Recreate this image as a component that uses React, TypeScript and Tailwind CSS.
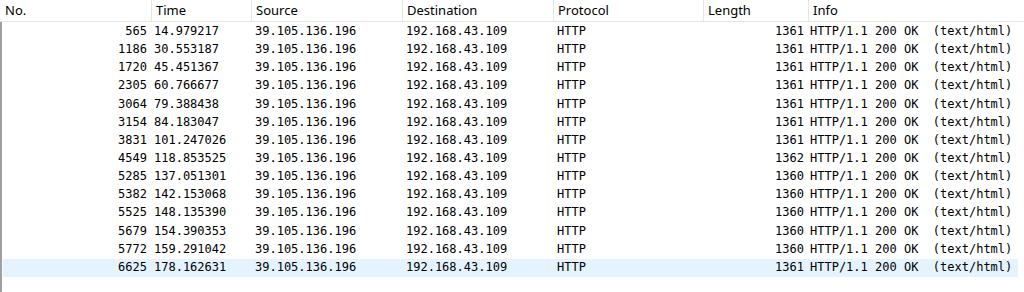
import React from "react";

const rows: [string, string, string][] = [
  ["565", "14.979217", "1361"],
  ["1186", "30.553187", "1361"],
  ["1720", "45.451367", "1361"],
  ["2305", "60.766677", "1361"],
  ["3064", "79.388438", "1361"],
  ["3154", "84.183047", "1361"],
  ["3831", "101.247026", "1361"],
  ["4549", "118.853525", "1362"],
  ["5285", "137.051301", "1360"],
  ["5382", "142.153068", "1360"],
  ["5525", "148.135390", "1360"],
  ["5679", "154.390353", "1360"],
  ["5772", "159.291042", "1360"],
  ["6625", "178.162631", "1361"],
];

const headers = ["No.", "Time", "Source", "Destination", "Protocol", "Length", "Info"];

export default function App() {
  return (
    <div className="w-[1024px] h-[292px] bg-white overflow-hidden text-black">
      <div
        className="grid grid-cols-[151px_100px_151px_151px_150px_105px_1fr] h-[22px] border-b border-[#e5e5e5] text-[13px] leading-[20px]"
        style={{ fontFamily: '"Noto Sans", "Open Sans", sans-serif' }}
      >
        {headers.map((h, i) => (
          <div
            key={h}
            className={i === 0 ? "pl-[5px]" : "pl-[4px] border-l border-[#e5e5e5]"}
          >
            {h}
          </div>
        ))}
      </div>
      <div className="h-[270px] border-l-2 border-[#a0a0a0] pl-px pt-px pr-[6px]">
        <div className="text-[12px]" style={{ fontFamily: '"DejaVu Sans Mono", "Liberation Mono", monospace' }}>
          {rows.map(([no, time, len], idx) => (
            <div
              key={no}
              className={
                "grid grid-cols-[148px_100px_151px_151px_150px_105px_1fr] h-[18.15px] leading-[17px] whitespace-pre " +
                (idx === rows.length - 1 ? "bg-[#e5f3ff]" : "")
              }
            >
              <div className="text-right pr-[4px]">{no}</div>
              <div className="pl-[3px]">{time}</div>
              <div className="pl-[4px]">39.105.136.196</div>
              <div className="pl-[4px]">192.168.43.109</div>
              <div className="pl-[4px]">HTTP</div>
              <div className="text-right pr-[4px]">{len}</div>
              <div className="pl-[2px]">HTTP/1.1 200 OK  (text/html)</div>
            </div>
          ))}
        </div>
      </div>
    </div>
  );
}
